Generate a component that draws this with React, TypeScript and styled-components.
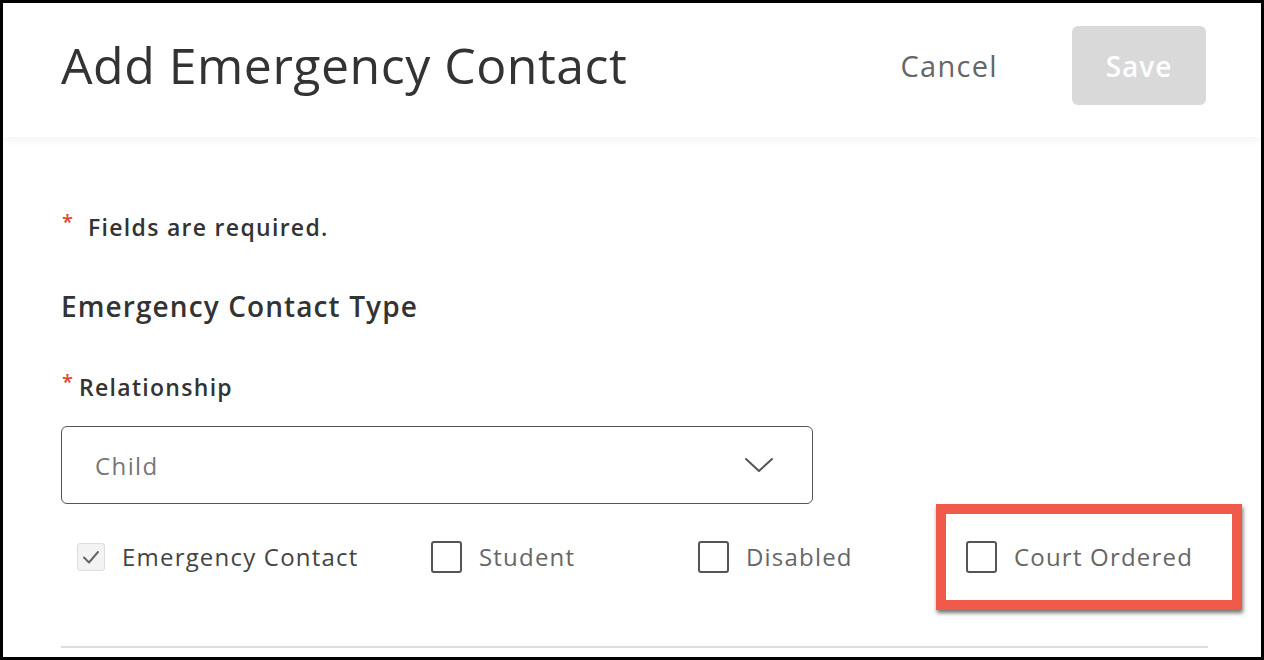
import styled, { createGlobalStyle } from 'styled-components';

const GlobalStyle = createGlobalStyle`
  html, body {
    margin: 0;
    padding: 0;
    background: #000;
  }
  body {
    font-family: "Open Sans", "Noto Sans", sans-serif;
    color: #333;
  }
`;

const OPTIONS = [
  { label: 'Emergency Contact', checked: true, disabled: true },
  { label: 'Student', checked: false, disabled: false },
  { label: 'Disabled', checked: false, disabled: false },
  { label: 'Court Ordered', checked: false, disabled: false },
];

function ChevronDown() {
  return (
    <svg width="30" height="18" viewBox="0 0 30 18" fill="none">
      <path d="M2 3 L15 15 L28 3" stroke="#555" strokeWidth="2" strokeLinecap="round" strokeLinejoin="round" />
    </svg>
  );
}

function CheckMark() {
  return (
    <svg width="20" height="16" viewBox="0 0 20 16" fill="none">
      <path d="M3 8.5 L8 13.5 L17 3" stroke="#666" strokeWidth="2" strokeLinecap="round" strokeLinejoin="round" />
    </svg>
  );
}

function App() {
  return (
    <>
      <GlobalStyle />
      <Frame>
        <Header>
          <Title>Add Emergency Contact</Title>
          <Actions>
            <CancelButton>Cancel</CancelButton>
            <SaveButton disabled>Save</SaveButton>
          </Actions>
        </Header>
        <Body>
          <RequiredNote>
            <Asterisk>*</Asterisk>
            Fields are required.
          </RequiredNote>
          <SectionTitle>Emergency Contact Type</SectionTitle>
          <FieldLabel>
            <Asterisk $small>*</Asterisk>
            Relationship
          </FieldLabel>
          <Select>
            <SelectValue>Child</SelectValue>
            <ChevronDown />
          </Select>
          <OptionsRow>
            {OPTIONS.map((opt) => (
              <OptionItem key={opt.label}>
                <Box $checked={opt.checked} $disabled={opt.disabled}>
                  {opt.checked && <CheckMark />}
                </Box>
                <OptionLabel $disabled={opt.disabled}>{opt.label}</OptionLabel>
              </OptionItem>
            ))}
          </OptionsRow>
          <Divider />
        </Body>
        <Highlight />
      </Frame>
    </>
  );
}

const Frame = styled.div`
  position: relative;
  margin: 3px 0 0 3px;
  width: 1258px;
  height: 654px;
  background: #fff;
  overflow: hidden;
`;

const Header = styled.header`
  height: 134px;
  box-sizing: border-box;
  display: flex;
  align-items: center;
  justify-content: space-between;
  padding: 0 55px 9px 58px;
  box-shadow: 0 3px 10px rgba(0, 0, 0, 0.05);
  position: relative;
`;

const Title = styled.h1`
  margin: 0 0 2px;
  font-size: 50px;
  font-weight: 500;
  letter-spacing: 0.5px;
  color: #333;
  line-height: 60px;
`;

const Actions = styled.div`
  display: flex;
  align-items: center;
  gap: 74px;
`;

const CancelButton = styled.button`
  border: none;
  background: none;
  padding: 0;
  font-family: inherit;
  font-size: 29px;
  font-weight: 400;
  letter-spacing: 1.3px;
  color: #666;
  cursor: pointer;
`;

const SaveButton = styled.button`
  width: 134px;
  height: 79px;
  border: none;
  border-radius: 6px;
  background: #d9d9d9;
  color: #fff;
  font-family: inherit;
  font-size: 28px;
  font-weight: 600;
  letter-spacing: 1px;
`;

const Body = styled.div`
  padding: 74px 0 0 58px;
  width: 1147px;
`;

const RequiredNote = styled.div`
  display: flex;
  align-items: flex-start;
  font-size: 23px;
  font-weight: 600;
  letter-spacing: 1.3px;
  color: #333;
  line-height: 32px;
`;

const Asterisk = styled.span<{ $small?: boolean }>`
  color: #e0452f;
  font-size: 20px;
  font-weight: 600;
  line-height: 22px;
  letter-spacing: 0;
  width: ${({ $small }) => ($small ? '17px' : '26px')};
  padding-left: 1px;
`;

const SectionTitle = styled.h2`
  margin: 45px 0 0;
  font-size: 28px;
  font-weight: 600;
  letter-spacing: 1.1px;
  color: #333;
  line-height: 36px;
`;

const FieldLabel = styled.label`
  margin-top: 47px;
  display: flex;
  align-items: flex-start;
  font-size: 23px;
  font-weight: 600;
  letter-spacing: 1.3px;
  color: #333;
  line-height: 32px;
`;

const Select = styled.div`
  margin-top: 23px;
  width: 752px;
  height: 78px;
  box-sizing: border-box;
  border: 1.5px solid #555;
  border-radius: 6px;
  display: flex;
  align-items: center;
  justify-content: space-between;
  padding: 0 38px 0 33px;
`;

const SelectValue = styled.span`
  font-size: 24px;
  letter-spacing: 1.4px;
  color: #777;
`;

const OptionsRow = styled.div`
  margin-top: 37px;
  display: grid;
  grid-template-columns: 354px 267px 268px auto;
  padding-left: 16px;
  align-items: center;
`;

const OptionItem = styled.label`
  display: flex;
  align-items: center;
  gap: 17px;
`;

const Box = styled.span<{ $checked: boolean; $disabled: boolean }>`
  box-sizing: border-box;
  width: ${({ $disabled }) => ($disabled ? '28px' : '31px')};
  height: ${({ $disabled }) => ($disabled ? '28px' : '32px')};
  border: ${({ $disabled }) => ($disabled ? '1.5px solid #ddd' : '2px solid #555')};
  border-radius: 3px;
  background: ${({ $disabled }) => ($disabled ? '#f3f3f3' : '#fff')};
  display: flex;
  align-items: center;
  justify-content: center;
`;

const OptionLabel = styled.span<{ $disabled: boolean }>`
  font-size: 24px;
  line-height: 32px;
  letter-spacing: 1.2px;
  color: ${({ $disabled }) => ($disabled ? '#444' : '#666')};
`;

const Divider = styled.hr`
  margin: 73px 0 0;
  border: none;
  border-top: 2px solid #ddd;
  width: 1147px;
`;

const Highlight = styled.div`
  position: absolute;
  left: 933px;
  top: 501px;
  width: 306px;
  height: 106px;
  box-sizing: border-box;
  border: 10px solid #f05a4b;
  box-shadow: 1px 3px 4px rgba(0, 0, 0, 0.55);
`;

export default App;
